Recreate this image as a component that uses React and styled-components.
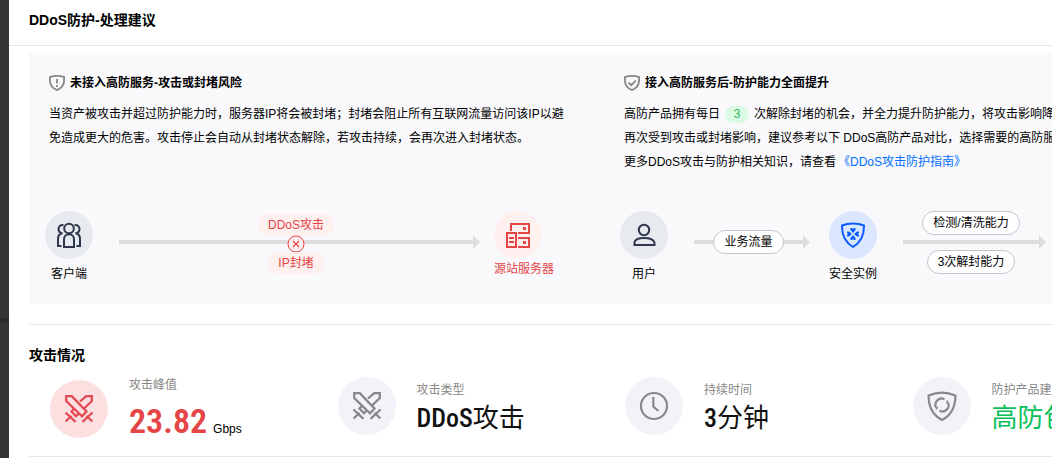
import styled, { createGlobalStyle } from "styled-components";

const GlobalStyle = createGlobalStyle`
  * {
    box-sizing: border-box;
  }
  body {
    margin: 0;
    background: #fff;
    color: #000;
    font-family: "Liberation Sans", "Noto Sans CJK SC", sans-serif;
    font-size: 12px;
    line-height: 24px;
    overflow: hidden;
  }
  h1, h2, h3, p, dl, dd {
    margin: 0;
  }
`;

const Page = styled.div`
  display: flex;
  min-height: 100vh;
`;

const SideStrip = styled.div`
  flex: 0 0 9px;
  background: linear-gradient(#333 318px, #272727 319px, #333 324px);
`;

const Main = styled.main`
  flex: 1;
  min-width: 0;
`;

const Header = styled.header`
  padding: 8px 20px 13px;
  border-bottom: 1px solid #e5e5e5;
`;

const Title = styled.h1`
  font-size: 14px;
  line-height: 24px;
`;

const Content = styled.div`
  min-width: 1170px;
  padding: 7px 0 0 20px;
`;

const Panel = styled.section`
  display: grid;
  grid-template-columns: 1fr 1fr;
  background: #f9f9fc;
`;

const Plan = styled.article`
  display: flex;
  flex-direction: column;
  padding: 18px 20px 18px;
  white-space: nowrap;
`;

const PlanTitle = styled.h3`
  display: flex;
  align-items: center;
  gap: 5px;
  margin-bottom: 7px;
  font-size: 12px;
`;

const PlanText = styled.p`
  min-height: 72px;
  margin-bottom: 37px;
  a {
    margin-left: 2px;
    color: #006eff;
    text-decoration: none;
  }
`;

const Count = styled.span`
  display: inline-block;
  width: 24px;
  margin: 0 5px;
  border-radius: 9px;
  background: #dcf9e4;
  color: #29b955;
  line-height: 17px;
  text-align: center;
`;

const Flow = styled.div`
  display: flex;
  align-items: flex-start;
  width: ${({ $width }) => $width};
  min-height: 75px;
  margin-left: -4px;
`;

const NODE_COLORS = {
  plain: { background: "#e7eaef", icon: "#2d364d", text: "#000" },
  danger: { background: "#fff0f0", icon: "#e54545", text: "#e54545" },
  safe: { background: "#dbe7ff", icon: "#0a5cff", text: "#000" },
};

const NodeBox = styled.div`
  display: flex;
  flex: 0 0 48px;
  flex-direction: column;
  align-items: ${({ $tone }) => ($tone === "danger" ? "flex-start" : "center")};
  gap: ${({ $tone }) => ($tone === "danger" ? "2px" : "3px")};
  min-width: 0;
  color: ${({ $tone }) => NODE_COLORS[$tone].text};
  line-height: ${({ $tone }) => ($tone === "danger" ? "16px" : "24px")};
`;

const NodeIcon = styled.div`
  display: grid;
  place-items: center;
  width: 48px;
  height: 48px;
  border-radius: 50%;
  background: ${({ $tone }) => NODE_COLORS[$tone].background};
  color: ${({ $tone }) => NODE_COLORS[$tone].icon};
`;

const Arrow = styled.div`
  display: flex;
  flex: ${({ $grow }) => $grow || 1};
  align-items: center;
  height: 62px;
  margin: 0 ${({ $gap }) => $gap || "14px"} 0 26px;
  &::after {
    content: "";
    border: 7px solid transparent;
    border-right: 0;
    border-left-color: #ddd;
  }
`;

const Shaft = styled.div`
  display: grid;
  flex: 1;
  align-items: center;
  justify-items: center;
  height: 62px;
  background: linear-gradient(#ddd, #ddd) center / 100% 4px no-repeat;
`;

const TagStack = styled.div`
  display: flex;
  flex-direction: column;
  align-items: center;
  gap: ${({ $gap }) => $gap || "0"};
  padding-top: ${({ $gap }) => ($gap ? "0" : "3px")};
`;

const Tag = styled.span`
  padding: 0 10px;
  border: 1px solid #c1c6cf;
  border-radius: 12px;
  background: #fff;
  line-height: 22px;
`;

const DangerTag = styled.span`
  padding: 0 10px;
  border-radius: 11px;
  background: #fff0f0;
  color: #e54545;
  line-height: 22px;
`;

const BlockIcon = styled.svg`
  margin: -1px 0;
`;

const Stats = styled.section`
  margin-top: 20px;
  padding-top: 18px;
  border-top: 1px solid #e5e5ec;
  border-bottom: 1px solid #e5e5ec;
`;

const StatsTitle = styled.h2`
  font-size: 14px;
  line-height: 24px;
`;

const StatList = styled.dl`
  display: grid;
  grid-template-columns: repeat(4, 1fr);
  height: 89px;
  padding-top: 7px;
`;

const StatItem = styled.div`
  display: flex;
  align-items: center;
  gap: 21px;
  height: ${({ $tone }) => ($tone === "danger" ? "70px" : "64px")};
  padding-left: 21px;
  white-space: nowrap;
`;

const StatIcon = styled.div`
  display: grid;
  flex: none;
  place-items: center;
  width: 58px;
  height: 58px;
  border-radius: 50%;
  background: ${({ $tone }) => ($tone === "danger" ? "#fce0e1" : "#f2f3f8")};
  color: ${({ $tone }) => ($tone === "danger" ? "#e54b54" : "#888")};
`;

const StatLabel = styled.dt`
  color: #888;
  line-height: 24px;
`;

const VALUE_COLORS = { danger: "#e54545", plain: "#111", safe: "#0abf5b" };

const StatValue = styled.dd`
  color: ${({ $tone }) => VALUE_COLORS[$tone]};
  font-family: "Roboto Condensed", Roboto, "Noto Sans CJK SC", sans-serif;
  font-size: ${({ $tone }) => ($tone === "danger" ? "34px" : "26px")};
  font-weight: ${({ $tone }) => ($tone === "danger" ? 600 : 400)};
  line-height: ${({ $tone }) => ($tone === "danger" ? "48px" : "32px")};
  b {
    font-weight: 500;
    line-height: 1;
  }
  small {
    margin-left: 6px;
    color: #000;
    font-family: "Liberation Sans", sans-serif;
    font-size: 12px;
    font-weight: 400;
    line-height: 1;
  }
`;

const Shield = ({ children }) => (
  <svg width="16" height="16" viewBox="0 0 16 16" fill="none" stroke="#888" strokeWidth="1.8">
    <path d="M8 .9C5.800 .9 3 1.300.9 2.200V5.500C.9 9.800 4 13.300 8 15.100 12 13.300 15.100 9.800 15.100 5.500V2.200C13 1.300 10.200.9 8 .9Z" />
    {children}
  </svg>
);

const Swords = () => (
  <svg width="30" height="30" viewBox="0 0 30 30" fill="none" stroke="currentColor" strokeWidth="2.3">
    <path d="M2.200 2.200H7.800L22.500 17.500 18 22.300 2.200 7Z" />
    <path d="M16 7.500 22.200 2.200H27.800V7L20 14.500M14.500 19.500 12 22.300 7.500 17.500 9.800 15" />
    <path d="M28.500 18.500 18.500 27.800M22.500 21.800 28.300 27.500M1.500 18.500 11.500 27.800M7.500 21.800 1.700 27.500" />
  </svg>
);

const Clock = () => (
  <svg width="30" height="30" viewBox="0 0 30 30" fill="none" stroke="currentColor" strokeWidth="2.200">
    <circle cx="15" cy="15" r="13" />
    <path d="M14.300 6V15.500L19.500 20" />
  </svg>
);

const ShieldSync = () => (
  <svg width="30" height="30" viewBox="0 0 30 30" fill="none" stroke="currentColor" strokeWidth="2.200">
    <path d="M15 1.700C10.500 1.700 6 2.700 1.600 4.500 1.500 15 5 23.500 15 29 25 23.500 28.500 15 28.400 4.500 24 2.700 19.500 1.700 15 1.700Z" />
    <path d="M9 16.500A6.300 6.300 0 0 1 17.500 8.200M21 11.500A6.300 6.300 0 0 1 12.500 19.800" />
    <path d="M20.700 9.500 19.600 12.200M9.300 18.500 10.400 15.800" strokeWidth="1.600" />
  </svg>
);

const Clients = () => (
  <svg width="26" height="26" viewBox="0 0 26 26" fill="none" stroke="currentColor" strokeWidth="2">
    <circle cx="13" cy="6.500" r="4.800" />
    <path d="M8 25V17.500C8 14.500 10 12.300 13 12.300S18 14.500 18 17.500V25Z" />
    <path d="M7.500 3.200C4.500 2.700 2.500 4.500 2.500 7 2.500 9.300 4 11 6.500 11.300 3.500 11.800 2 14 2 17V24H5.500M18.500 3.200C21.500 2.700 23.500 4.500 23.500 7 23.500 9.300 22 11 19.500 11.300 22.500 11.800 24 14 24 17V24H20.500" />
  </svg>
);

const Server = () => (
  <svg width="26" height="26" viewBox="0 0 26 26" fill="none" stroke="currentColor" strokeWidth="2">
    <path d="M6 9V2H24V11H13M13 16H24V25H13" />
    <path d="M2 11H11V25H2Z" />
    <path d="M4 16H9M4 20H9" />
    <path d="M18 6.500H21M18 20.500H21" strokeWidth="3" />
  </svg>
);

const Person = () => (
  <svg width="24" height="24" viewBox="0 0 24 24" fill="none" stroke="currentColor" strokeWidth="2">
    <circle cx="12" cy="7" r="5.200" />
    <path d="M2.500 22V19.500C3 16.500 7 15 12 15S21.500 16.500 22.500 19.500V22Z" />
  </svg>
);

const SafeShield = () => (
  <svg width="26" height="26" viewBox="0 0 26 26" fill="none" stroke="currentColor" strokeWidth="2">
    <path d="M13 1.500C9 1.500 5 2.300 2 3.500 1.800 13 4.500 20 13 25 21.500 20 24.200 13 24 3.500 21 2.300 17 1.500 13 1.500Z" />
    <path
      fill="currentColor"
      stroke="none"
      d="M10.500 6H12L13 7 14 6H15.500V8L13 11 10.500 8ZM10.500 18H12L13 17 14 18H15.500V16L13 13 10.500 16ZM7 9.500V11L8 12 7 13V14.500H9L12 12 9 9.500ZM19 9.500V11L18 12 19 13V14.500H17L14 12 17 9.500Z"
    />
  </svg>
);

const Node = ({ tone = "plain", label, children }) => (
  <NodeBox $tone={tone}>
    <NodeIcon $tone={tone}>{children}</NodeIcon>
    <span>{label}</span>
  </NodeBox>
);

const stats = [
  { label: "攻击峰值", tone: "danger", icon: <Swords />, value: <>23.82<small>Gbps</small></> },
  { label: "攻击类型", tone: "plain", icon: <Swords />, value: <><b>DDoS</b>攻击</> },
  { label: "持续时间", tone: "plain", icon: <Clock />, value: <><b>3</b>分钟</> },
  { label: "防护产品建议", tone: "safe", icon: <ShieldSync />, value: "高防包" },
];

const App = () => {
  return (
    <>
      <GlobalStyle />
      <Page>
        <SideStrip />
        <Main>
          <Header>
            <Title>DDoS防护-处理建议</Title>
          </Header>
          <Content>
            <Panel>
              <Plan>
                <PlanTitle>
                  <Shield>
                    <path d="M8 4V8.500M8 10V12" />
                  </Shield>
                  未接入高防服务-攻击或封堵风险
                </PlanTitle>
                <PlanText>
                  当资产被攻击并超过防护能力时，服务器IP将会被封堵；封堵会阻止所有互联网流量访问该IP以避
                  <br />
                  免造成更大的危害。攻击停止会自动从封堵状态解除，若攻击持续，会再次进入封堵状态。
                </PlanText>
                <Flow $width="497px">
                  <Node label="客户端">
                    <Clients />
                  </Node>
                  <Arrow>
                    <Shaft>
                      <TagStack>
                        <DangerTag>DDoS攻击</DangerTag>
                        <BlockIcon width="18" height="18" viewBox="0 0 18 18" fill="#fff0f0" stroke="#e54545">
                          <circle cx="9" cy="9" r="8" />
                          <path d="M6 6 12 12M12 6 6 12" strokeWidth="1.300" />
                        </BlockIcon>
                        <DangerTag>IP封堵</DangerTag>
                      </TagStack>
                    </Shaft>
                  </Arrow>
                  <Node tone="danger" label="源站服务器">
                    <Server />
                  </Node>
                </Flow>
              </Plan>
              <Plan>
                <PlanTitle>
                  <Shield>
                    <path d="M4.500 7.500 7.200 10.200 11.800 5.600" />
                  </Shield>
                  接入高防服务后-防护能力全面提升
                </PlanTitle>
                <PlanText>
                  高防产品拥有每日<Count>3</Count>次解除封堵的机会，并全力提升防护能力，将攻击影响降
                  <br />
                  再次受到攻击或封堵影响，建议参考以下 DDoS高防产品对比，选择需要的高防服
                  <br />
                  更多DDoS攻击与防护相关知识，请查看<a href="#guide">《DDoS攻击防护指南》</a>
                </PlanText>
                <Flow $width="440px">
                  <Node label="用户">
                    <Person />
                  </Node>
                  <Arrow $grow="0 0 116px" $gap="19px">
                    <Shaft>
                      <TagStack $gap="15px">
                        <Tag>业务流量</Tag>
                      </TagStack>
                    </Shaft>
                  </Arrow>
                  <Node tone="safe" label="安全实例">
                    <SafeShield />
                  </Node>
                  <Arrow>
                    <Shaft>
                      <TagStack $gap="15px">
                        <Tag>检测/清洗能力</Tag>
                        <Tag>3次解封能力</Tag>
                      </TagStack>
                    </Shaft>
                  </Arrow>
                </Flow>
              </Plan>
            </Panel>
            <Stats>
              <StatsTitle>攻击情况</StatsTitle>
              <StatList>
                {stats.map((stat) => (
                  <StatItem key={stat.label} $tone={stat.tone}>
                    <StatIcon $tone={stat.tone}>{stat.icon}</StatIcon>
                    <div>
                      <StatLabel>{stat.label}</StatLabel>
                      <StatValue $tone={stat.tone}>{stat.value}</StatValue>
                    </div>
                  </StatItem>
                ))}
              </StatList>
            </Stats>
          </Content>
        </Main>
      </Page>
    </>
  );
};

export default App;
